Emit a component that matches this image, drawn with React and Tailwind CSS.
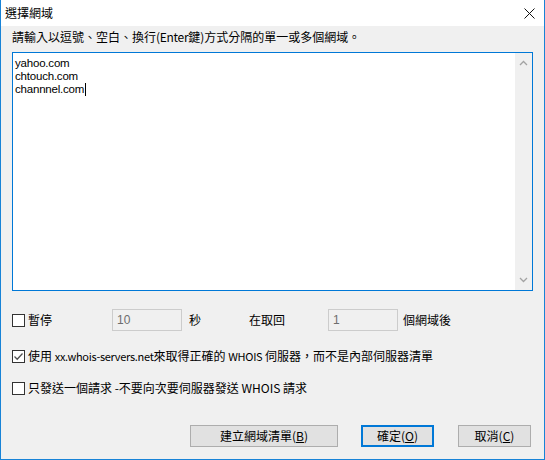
import React from 'react';

const font = "font-['Noto_Sans_CJK_TC','Liberation_Sans',sans-serif]";
const latin = "font-['Liberation_Sans','Noto_Sans_CJK_TC',sans-serif]";

const CheckBox = ({ checked }) => (
  <span className="w-[13px] h-[13px] border border-[#333333] bg-white flex items-center justify-center shrink-0">
    {checked && (
      <svg width="11" height="11" viewBox="0 0 11 11">
        <path d="M1.5 5.5 L4.2 8.2 L9.5 2.5" fill="none" stroke="#505050" strokeWidth="1.3" />
      </svg>
    )}
  </span>
);

const NumBox = ({ value }) => (
  <div className={`w-[70px] h-[22px] border border-[#cccccc] bg-[#f0f0f0] flex items-center pl-[4px] text-[#6d6d6d] ${latin}`}>
    {value}
  </div>
);

const Btn = ({ children, primary, className = '' }) => (
  <button
    className={`h-[22px] flex items-center justify-center bg-[#e1e1e1] ${
      primary ? 'border-2 border-[#0078d7]' : 'border border-[#adadad]'
    } ${className}`}
  >
    {children}
  </button>
);

const domains = ['yahoo.com', 'chtouch.com', 'channnel.com'];

export default function App() {
  return (
    <div className={`w-[545px] h-[460px] bg-[#f0f0f0] border-x border-b border-[#1883d7] flex flex-col text-[12px] leading-[16px] text-black ${font}`}>
      {/* title bar */}
      <div className="h-[26px] bg-white flex items-center justify-between pl-[4px] pr-[9px] shrink-0">
        <span className="text-[12px]">選擇網域</span>
        <svg width="11" height="11" viewBox="0 0 11 11">
          <path d="M0.5 0.5 L10.5 10.5 M10.5 0.5 L0.5 10.5" stroke="#111" strokeWidth="1" />
        </svg>
      </div>

      <div className="pl-[11px] pr-[10px] flex flex-col">
        <div className="h-[16px] leading-[16px] mt-[3px] whitespace-nowrap">
          請輸入以逗號、空白、換行<span className="tracking-[-0.3px]">(Enter</span>鍵)方式分隔的單一或多個網域。
        </div>

        {/* domain list */}
        <div className="mt-[7px] h-[239px] w-[521px] border border-[#0078d7] bg-white flex">
          <div className={`flex-1 pl-[2px] pt-[4px] text-[11.5px] leading-[13px] ${latin}`}>
            {domains.map((d, i) => (
              <div key={d} className="flex items-center h-[13px]">
                <span className="tracking-[-0.2px]">{d}</span>
                {i === domains.length - 1 && <span className="w-px h-[13px] bg-black ml-px" />}
              </div>
            ))}
          </div>
          <div className="w-[17px] bg-[#f0f0f0] flex flex-col items-center justify-between py-[7px]">
            <svg width="9" height="6" viewBox="0 0 9 6">
              <path d="M1 5 L4.5 1.5 L8 5" fill="none" stroke="#a3a3a3" strokeWidth="1.3" />
            </svg>
            <svg width="9" height="6" viewBox="0 0 9 6">
              <path d="M1 1 L4.5 4.5 L8 1" fill="none" stroke="#a3a3a3" strokeWidth="1.3" />
            </svg>
          </div>
        </div>

        {/* pause row */}
        <div className="mt-[18px] h-[22px] flex items-center">
          <div className="w-[100px] flex items-center">
            <CheckBox />
            <span className="ml-[3px]">暫停</span>
          </div>
          <NumBox value="10" />
          <span className="ml-[7px] w-[60px]">秒</span>
          <span className="w-[79px]">在取回</span>
          <NumBox value="1" />
          <span className="ml-[5px]">個網域後</span>
        </div>

        <div className="mt-[14px] h-[22px] flex items-center whitespace-nowrap">
          <CheckBox checked />
          <span className="ml-[3px]">
            使用 <span className="text-[11px] tracking-[-0.3px]">xx.whois-servers.net</span>來取得正確的{' '}
            <span className="text-[11px] tracking-[-0.3px]">WHOIS</span> 伺服器，而不是內部伺服器清單
          </span>
        </div>

        <div className="mt-[10px] h-[22px] flex items-center whitespace-nowrap">
          <CheckBox />
          <span className="ml-[3px]">只發送一個請求 -不要向次要伺服器發送 WHOIS 請求</span>
        </div>

        {/* buttons */}
        <div className="mt-[26px] flex">
          <Btn className="ml-[178px] w-[148px]">
            建立網域清單(<span className="underline">B</span>)
          </Btn>
          <Btn primary className="ml-[23px] w-[73px]">
            確定(<span className="underline">O</span>)
          </Btn>
          <Btn className="ml-[24px] w-[73px]">
            取消(<span className="underline">C</span>)
          </Btn>
        </div>
      </div>
    </div>
  );
}
